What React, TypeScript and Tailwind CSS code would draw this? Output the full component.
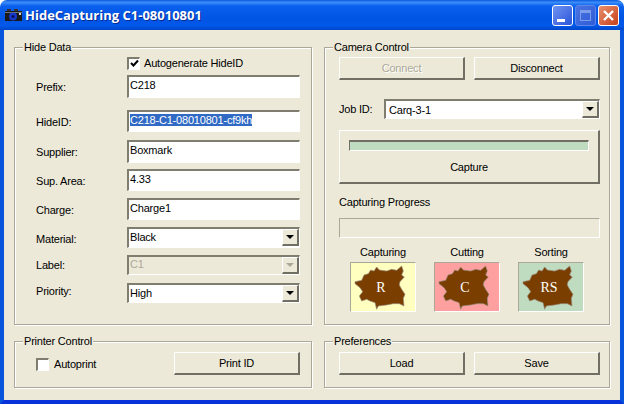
const uiFont = "font-['Liberation_Sans',Arial,sans-serif] text-[11px] tracking-[-0.2px] leading-[14px] text-black";
const sunken = 'border-t-2 border-l-2 border-b border-r border-t-[#7f7d70] border-l-[#7f7d70] border-b-white border-r-white';
const raised = 'border-t border-l border-b-2 border-r-2 border-t-white border-l-white border-b-[#716f64] border-r-[#716f64]';

function Group({ title, className, children }: { title: string; className: string; children: React.ReactNode }) {
  return (
    <div className={`relative border border-[#aca899] shadow-[1px_1px_0_#fff,inset_1px_1px_0_#fff] ${className}`}>
      <span className="absolute -top-[8px] left-[8px] bg-[#ece9d8] px-[1px]">{title}</span>
      {children}
    </div>
  );
}

function Button({ label, disabled, className }: { label: string; disabled?: boolean; className: string }) {
  return (
    <div className={`${raised} flex shrink-0 items-center justify-center bg-[#ece9d8] ${disabled ? 'text-[#aca899] [text-shadow:1px_1px_0_#fff]' : ''} ${className}`}>
      {label}
    </div>
  );
}

function Arrow({ disabled }: { disabled?: boolean }) {
  return (
    <div className={`${raised} flex h-[17px] w-[17px] items-center justify-center bg-[#ece9d8]`}>
      <div className={`h-0 w-0 border-x-[4px] border-t-[4px] border-x-transparent ${disabled ? 'border-t-[#aca899]' : 'border-t-black'}`} />
    </div>
  );
}

function Check({ checked }: { checked?: boolean }) {
  return (
    <div className={`${sunken} flex h-[13px] w-[13px] items-center justify-center bg-white`}>
      {checked && (
        <svg width="9" height="9" viewBox="0 0 9 9">
          <path d="M1 4 L3.5 6.5 L8 1.5" fill="none" stroke="#000" strokeWidth="2" />
        </svg>
      )}
    </div>
  );
}

function Field({ label, className, h, labelPad = 'pt-[5px]', children }: { label: string; className: string; h: string; labelPad?: string; children: React.ReactNode }) {
  return (
    <div className={`flex ${className}`}>
      <span className={`w-[91px] ${labelPad}`}>{label}</span>
      <div className={`w-[173px] ${h}`}>{children}</div>
    </div>
  );
}

function TextBox({ value, selected }: { value: string; selected?: boolean }) {
  return (
    <div className={`${sunken} h-full bg-white pl-[1px] pt-[1px]`}>
      <span className={selected ? 'bg-[#316ac5] text-white' : ''}>{value}</span>
    </div>
  );
}

function Combo({ value, disabled, textPad = 'pt-[1px] pl-[1px]' }: { value: string; disabled?: boolean; textPad?: string }) {
  return (
    <div className={`${sunken} flex h-full justify-between ${disabled ? 'bg-[#ece9d8] text-[#aca899]' : 'bg-white'}`}>
      <span className={textPad}>{value}</span>
      <Arrow disabled={disabled} />
    </div>
  );
}

function Hide({ label, bg, name }: { label: string; bg: string; name: string }) {
  return (
    <div className="flex w-[66px] flex-col items-center">
      <span className="mb-[3px]">{name}</span>
      <div className={`border-t border-l border-t-[#aca899] border-l-[#aca899] border-b border-r border-b-white border-r-white ${bg}`}>
        <svg width="64" height="48" viewBox="3 6 192 144" className="block">
          <polygon
            points="15,62 35,58 42,42 55,38 62,27 72,30 80,18 88,27 110,30 125,25 140,28 155,15 160,30 155,42 163,48 150,62 148,72 155,85 165,100 160,112 162,135 148,128 130,128 110,132 85,135 80,145 75,125 60,120 50,115 35,120 28,105 38,92 30,80 15,68"
            fill="#7a3e00"
            stroke="#9a8f84"
            strokeWidth="2"
          />
          <text x="93" y="94" textAnchor="middle" fontFamily="'Liberation Serif',serif" fontSize="42" fill="#fff">{label}</text>
        </svg>
      </div>
    </div>
  );
}

function TitleBar() {
  return (
    <div className="flex h-[30px] items-center rounded-t-[7px] bg-[linear-gradient(180deg,#0a5ae0_0%,#3c8cf8_8%,#0a60ee_20%,#0054e3_60%,#0258ea_85%,#0046c8_100%)] pl-[5px] pr-[5px]">
      <svg width="17" height="15" viewBox="0 0 17 15" className="mr-[3px]">
        <rect x="0" y="3" width="17" height="10" fill="#1a1a1a" />
        <rect x="2" y="1" width="4" height="2" fill="#333" />
        <rect x="9" y="1" width="4" height="2" fill="#333" />
        <rect x="0" y="4" width="17" height="1" fill="#777" />
        <circle cx="8" cy="8.5" r="4" fill="#1638c8" />
        <circle cx="8" cy="8.5" r="1.5" fill="#0a0f50" />
        <rect x="14" y="5" width="2" height="2" fill="#d8d8d8" />
      </svg>
      <span className="font-['Open_Sans',sans-serif] text-[13px] leading-[16px] font-bold tracking-normal text-white [text-shadow:1px_1px_0_#0a2a90]">
        HideCapturing C1-08010801
      </span>
      <div className="ml-auto flex gap-[2px]">
        <div className="flex h-[21px] w-[21px] items-end rounded-[3px] border border-white bg-[linear-gradient(135deg,#6f93f2,#2a55d8)] pb-[3px] pl-[4px]">
          <div className="h-[3px] w-[8px] bg-white" />
        </div>
        <div className="flex h-[21px] w-[21px] items-center justify-center rounded-[3px] border border-[#5c86ea] bg-[linear-gradient(135deg,#4a73e0,#2f5cd8)]">
          <div className="h-[11px] w-[11px] border border-t-[3px] border-[#7d9cec]" />
        </div>
        <div className="flex h-[21px] w-[21px] items-center justify-center rounded-[3px] border border-white bg-[linear-gradient(135deg,#e8906c,#c8401c)]">
          <svg width="13" height="13" viewBox="0 0 13 13">
            <path d="M2 2 L11 11 M11 2 L2 11" stroke="#fff" strokeWidth="2.4" />
          </svg>
        </div>
      </div>
    </div>
  );
}

export default function App() {
  return (
    <div className={`${uiFont} h-[404px] w-[624px] overflow-hidden bg-white`}>
      <TitleBar />
      <div className="h-[374px] border-x-4 border-b-4 border-x-[#0855dd] border-b-[#0831d9] bg-[#ece9d8] px-[10px] pt-[17px]">
        <div className="grid grid-cols-[298px_286px] grid-rows-[278px_47px] gap-x-[12px] gap-y-[16px]">
          <Group title="Hide Data" className="pl-[21px]">
            <div className="ml-[91px] mt-[8px] flex items-center gap-[4px]">
              <Check checked />
              <span>Autogenerate HideID</span>
            </div>
            <Field label="Prefix:" className="mt-[5px]" h="h-[23px]"><TextBox value="C218" /></Field>
            <Field label="HideID:" className="mt-[12px]" h="h-[22px]"><TextBox value="C218-C1-08010801-cf9kh" selected /></Field>
            <Field label="Supplier:" className="mt-[8px]" h="h-[23px]"><TextBox value="Boxmark" /></Field>
            <Field label="Sup. Area:" className="mt-[6px]" h="h-[22px]"><TextBox value="4.33" /></Field>
            <Field label="Charge:" className="mt-[7px]" h="h-[22px]"><TextBox value="Charge1" /></Field>
            <Field label="Material:" className="mt-[7px]" h="h-[21px]"><Combo value="Black" /></Field>
            <Field label="Label:" className="mt-[7px]" h="h-[20px]" labelPad="pt-[3px]"><Combo value="C1" disabled textPad="pl-[1px]" /></Field>
            <Field label="Priority:" className="mt-[8px]" h="h-[20px]" labelPad="pt-[1px]"><Combo value="High" /></Field>
          </Group>

          <Group title="Camera Control" className="pl-[14px] pt-[9px]">
            <div className="flex gap-[9px]">
              <Button label="Connect" disabled className="h-[23px] w-[126px]" />
              <Button label="Disconnect" className="h-[23px] w-[126px]" />
            </div>
            <div className="mt-[19px] flex items-center">
              <span className="w-[45px]">Job ID:</span>
              <div className="h-[20px] w-[216px]"><Combo value="Carq-3-1" textPad="pt-[2px] pl-[3px]" /></div>
            </div>
            <div className={`${raised} mt-[11px] h-[54px] w-[261px] bg-[#ece9d8] px-[9px] pt-[9px] text-center`}>
              <div className="h-[11px] border-t-2 border-l border-b border-r border-t-[#716f64] border-l-[#716f64] border-b-white border-r-white bg-[#c0dcc0]" />
              <div className="mt-[9px]">Capture</div>
            </div>
            <div className="mt-[11px]">Capturing Progress</div>
            <div className="mt-[9px] h-[20px] w-[261px] border border-t-[#aca899] border-l-[#aca899] border-b-white border-r-white" />
            <div className="mt-[7px] flex gap-[18px] pl-[11px]">
              <Hide name="Capturing" label="R" bg="bg-[#ffffc0]" />
              <Hide name="Cutting" label="C" bg="bg-[#ffa0a0]" />
              <Hide name="Sorting" label="RS" bg="bg-[#c0dcc0]" />
            </div>
          </Group>

          <Group title="Printer Control" className="flex items-start pl-[21px] pt-[10px]">
            <div className="mt-[5px] flex items-center gap-[5px]">
              <Check />
              <span>Autoprint</span>
            </div>
            <Button label="Print ID" className="ml-auto mr-[11px] h-[23px] w-[126px]" />
          </Group>

          <Group title="Preferences" className="flex gap-[9px] pl-[14px] pt-[10px]">
            <Button label="Load" className="h-[23px] w-[126px]" />
            <Button label="Save" className="h-[23px] w-[126px]" />
          </Group>
        </div>
      </div>
    </div>
  );
}
